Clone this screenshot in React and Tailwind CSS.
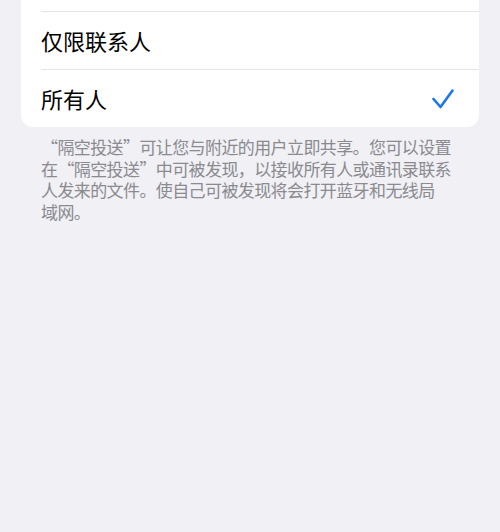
export default function App() {
  const font = { fontFamily: '"Noto Sans CJK SC", "Noto Sans", sans-serif' }
  const lines = [
    '“隔空投送”可让您与附近的用户立即共享。您可以设置',
    '在“隔空投送”中可被发现，以接收所有人或通讯录联系',
    '人发来的文件。使自己可被发现将会打开蓝牙和无线局',
    '域网。',
  ]
  return (
    <div className="w-[500px] h-[532px] bg-[#f0f0f5] overflow-hidden" style={font}>
      <div className="mx-[21px] bg-white rounded-b-[12px]">
        <div className="h-[11px]" />
        <div className="ml-5 border-t border-[#e3e3e8]" />
        <div className="h-[57px] pl-5 flex items-center text-[22px] text-black">仅限联系人</div>
        <div className="ml-5 border-t border-[#e3e3e8]" />
        <div className="h-[57px] pl-5 pr-[25px] flex items-center justify-between text-[22px] text-black">
          <span>所有人</span>
          <svg width="22" height="20" viewBox="0 0 22 20" fill="none">
            <path d="M1.5 10 L8.5 18 L20.5 1.5" stroke="#1877ee" strokeWidth="2.6" strokeLinecap="round" strokeLinejoin="round" />
          </svg>
        </div>
      </div>
      <div className="mt-[9px] pl-[41px] flex flex-col text-[17px] leading-[21.5px] text-[#8a8a8f] whitespace-nowrap tracking-[-0.6px]">
        {lines.map((l) => (
          <div key={l}>{l}</div>
        ))}
      </div>
    </div>
  )
}
